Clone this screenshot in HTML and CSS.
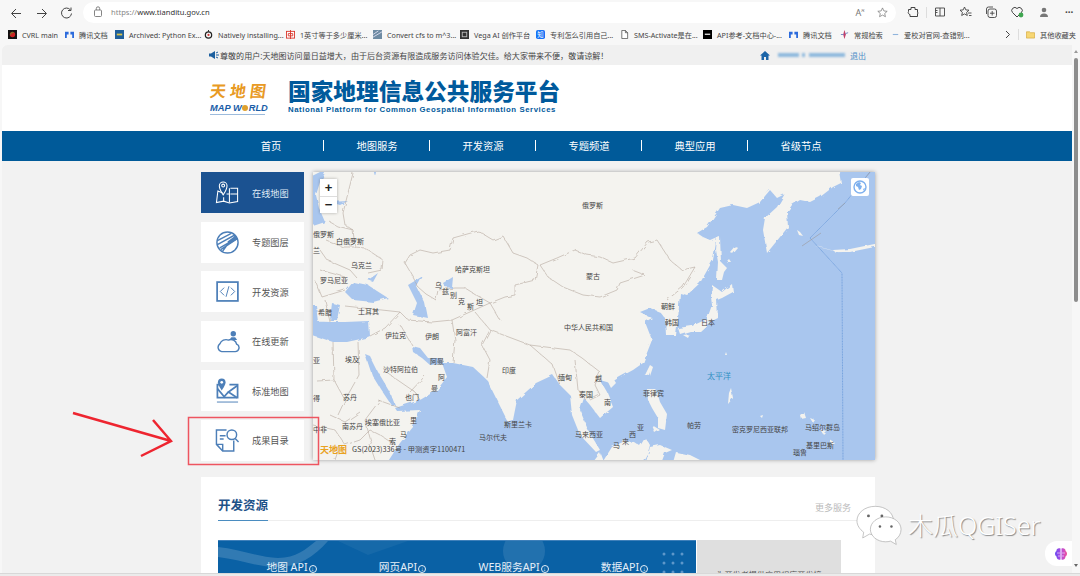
FILE: index.html
```html
<!DOCTYPE html>
<html lang="zh-CN">
<head>
<meta charset="utf-8">
<title>国家地理信息公共服务平台</title>
<link rel="stylesheet" href="styles.css">
</head>
<body>
<div class="app">
  <div class="toolbar">
    <svg class="tb-nav" width="76" height="24" viewBox="0 0 76 24"><g fill="none" stroke="#444" stroke-width="1"><path d="M20 12.500H11M15 8l-4.500 4.500L15 17"/><path d="M36 12.500H45M41 8l4.500 4.500L41 17"/><path d="M69.500 9a5 5 0 1 0 1 3.500M70 6.500V9.500H67"/></g></svg>
    <div class="address">
      <svg width="10" height="12" viewBox="0 0 10 12"><g fill="none" stroke="#777" stroke-width=".9"><rect x="1.500" y="4" width="7" height="6.500" rx="1"/><path d="M3.300 4V2.500a1.700 1.700 0 0 1 3.400 0V4"/></g></svg>
      <span class="url"><span class="url-dim">https://</span>www.tianditu.gov.cn</span>
      <span class="addr-right">
        <span class="read">A<sup>א</sup></span>
        <svg width="11" height="11" viewBox="0 0 12 12"><path d="M6 1l1.500 3.300 3.600.4-2.700 2.400.8 3.500L6 8.800l-3.200 1.800.8-3.500L.9 4.700l3.600-.4z" fill="none" stroke="#777" stroke-width=".8"/></svg>
      </span>
    </div>
    <div class="tb-icons">
      <svg width="12" height="12" viewBox="0 0 12 12"><path d="M4 1.500h4v2h2.500v2.500a1.500 1.500 0 0 1 0 2V10.500H3V8.500a2 2 0 0 1-1.500-3V3.500H4z" fill="none" stroke="#444"/></svg>
      <i class="tb-sep tb-sep-main"></i>
      <svg width="12" height="12" viewBox="0 0 12 12"><path d="M1.500 2h9v8h-9zM6 2v8M1.500 4.500h2M1.500 6.500h2" fill="none" stroke="#444" stroke-width=".9"/></svg>
      <svg width="13" height="12" viewBox="0 0 13 12"><path d="M5.500 1l1.300 2.900 3.200.3-2.400 2.200.7 3.100-2.800-1.600-2.800 1.600.7-3.100L1 4.200l3.200-.3zM9 7h3.500M10 9.500h2.500" fill="none" stroke="#444" stroke-width=".9"/></svg>
      <svg width="13" height="12" viewBox="0 0 13 12"><g fill="none" stroke="#444" stroke-width=".9"><rect x="3" y="3" width="8.500" height="8.500" rx="2"/><path d="M1.500 8V3a2 2 0 0 1 2-2H8M7.200 5v4.500M5 7.200h4.500"/></g></svg>
      <svg width="13" height="12" viewBox="0 0 13 12"><path d="M6 11L1.500 6.500a3 3 0 0 1 4.500-4 3 3 0 0 1 4.500 4z" fill="none" stroke="#444"/><circle cx="10" cy="9" r="2.400" fill="#3fa650"/></svg>
      <span class="avatar"><svg width="10" height="10" viewBox="0 0 10 10"><circle cx="5" cy="3" r="2.300" fill="#777"/><path d="M1 10a4 3.500 0 0 1 8 0z" fill="#777"/></svg></span>
      <span class="dots">···</span>
    </div>
  </div>

  <div class="bookmarks">
    <div class="bm bm1"><svg class="bi" viewBox="0 0 10 10"><rect width="10" height="10" fill="#111"/><circle cx="5" cy="5" r="3" fill="#c22"/><path d="M3 5a2 2 0 0 1 3-2" stroke="#3b3" fill="none"/></svg><span>CVRL main</span></div>
    <div class="bm bm2"><svg class="bi" viewBox="0 0 10 10"><path d="M0 2h4v3H2v4H0zM6 2h4v7H8V5H6z" fill="#2c6bdc"/></svg><span>腾讯文档</span></div>
    <div class="bm bm3"><svg class="bi" viewBox="0 0 10 10"><rect width="10" height="10" fill="#1f5f9b"/><rect x="2" y="4" width="6" height="2" fill="#d8c24a"/></svg><span>Archived: Python Ex...</span></div>
    <div class="bm bm4"><svg class="bi" viewBox="0 0 10 10"><circle cx="5" cy="5.500" r="3.500" fill="none" stroke="#222" stroke-width="1.400"/><circle cx="5" cy="5.500" r="1.200" fill="#c33"/><path d="M5 0v2" stroke="#222"/></svg><span>Natively installing...</span></div>
    <div class="bm bm5"><svg class="bi" viewBox="0 0 10 10"><rect x=".5" y="1.500" width="9" height="7.500" fill="#fff" stroke="#d9362b"/><path d="M5 0v10M2.500 4h5v2.500h-5z" stroke="#d9362b" fill="none"/></svg><span>1英寸等于多少厘米...</span></div>
    <div class="bm bm6"><svg class="bi" viewBox="0 0 10 10"><rect width="10" height="10" fill="#6e8ba3"/><path d="M0 8L10 2M0 5l6-4" stroke="#dde" /></svg><span>Convert cfs to m^3...</span></div>
    <div class="bm bm7"><svg class="bi" viewBox="0 0 10 10"><rect width="10" height="10" fill="#333"/><rect x="2.500" y="2.500" width="5" height="5" fill="none" stroke="#bbb"/></svg><span>Vega AI 创作平台</span></div>
    <div class="bm bm8"><svg class="bi" viewBox="0 0 10 10"><rect width="10" height="10" rx="2" fill="#1772f6"/><text x="1.500" y="8" class="bi-text">知</text></svg><span>专利怎么引用自己...</span></div>
    <div class="bm bm9"><svg class="bi" viewBox="0 0 10 10"><path d="M2 .5h4l2.500 2.500v6.500H2zM6 .5V3h2.500" fill="#fff" stroke="#444" stroke-width=".8"/></svg><span>SMS-Activate是在...</span></div>
    <div class="bm bm10"><svg class="bi" viewBox="0 0 10 10"><rect width="10" height="10" fill="#000"/><rect x="2" y="4" width="6" height="1.500" fill="#ddd"/></svg><span>API参考-文档中心-...</span></div>
    <div class="bm bm11"><svg class="bi" viewBox="0 0 10 10"><path d="M0 2h4v3H2v4H0zM6 2h4v7H8V5H6z" fill="#2c6bdc"/></svg><span>腾讯文档</span></div>
    <div class="bm bm12"><svg class="bi" viewBox="0 0 10 10"><path d="M5 0l1.500 5L5 10 3.500 5z" fill="#c2406a"/><path d="M1 5h3M6 4l3-1" stroke="#6b7fc0"/></svg><span>常规检索</span></div>
    <div class="bm bm13"><svg class="bi" viewBox="0 0 10 10"><path d="M2 5h6" stroke="#8fb4dc" stroke-width="1.200"/></svg><span>爱校对官网-查错别...</span></div>
    <div class="bm-end">
      <svg width="6" height="9" viewBox="0 0 6 9"><path d="M1 1l3.500 3.500L1 8" fill="none" stroke="#444"/></svg>
      <i class="tb-sep"></i>
      <div class="bm"><svg class="bi" viewBox="0 0 10 10"><path d="M.5 2h3.500l1 1h4.500v6h-9z" fill="#f7d774" stroke="#d3a431" stroke-width=".7"/></svg><span>其他收藏夹</span></div>
    </div>
  </div>

  <div class="viewport">
    <div class="page">
      <div class="notice">
        <div class="notice-msg">
          <svg width="10" height="8" viewBox="0 0 10 8"><path d="M0 2.500h2L6 0v8L2 5.500H0z" fill="#1c5f9f"/><path d="M7 2l2-1M7 4h3M7 6l2 1" stroke="#1c5f9f"/></svg>
          <span>尊敬的用户:天地图访问量日益增大，由于后台资源有限造成服务访问体验欠佳。给大家带来不便，敬请谅解！</span>
        </div>
        <div class="notice-user">
          <svg width="10" height="9" viewBox="0 0 10 9"><path d="M5 0L0 4.500h1.500V9h2.500V6h2v3h2.500V4.500H10z" fill="#1c65a8"/></svg>
          <span class="blur b1"></span><span class="blur b2"></span><span class="blur b3"></span>
          <a class="logout">退出</a>
        </div>
      </div>

      <header class="masthead">
        <div class="logo">
          <span class="logo-cn">天地图</span>
          <span class="logo-en">MAP W<b class="logo-o"></b>RLD</span>
          <i class="logo-swoosh"></i>
        </div>
        <div class="brand">
          <h1>国家地理信息公共服务平台</h1>
          <p>National Platform for Common Geospatial Information Services</p>
        </div>
      </header>

      <nav class="nav">
        <a>首页</a><a>地图服务</a><a>开发资源</a><a>专题频道</a><a>典型应用</a><a class="last">省级节点</a>
      </nav>

      <main class="main">
        <div class="hero">
          <ul class="side">
            <li class="side-item active">
              <svg viewBox="0 0 26 26" class="side-ico"><g fill="none" stroke="#fff" stroke-width="1.100"><path d="M8 13.500L3 11.500 1.500 23.500 9 22l6 2 8.500-1.500V8.500L16 8.500"/><path d="M16 14.500h7.500M15 8.500v15M9 22v-4M15 14.500h-3"/><path d="M8.500 15.500S4.500 9.500 4.500 6a4 4 0 0 1 8 0c0 3.500-4 9.500-4 9.500z"/><circle cx="8.500" cy="5.800" r="1.500"/></g></svg>
              <span>在线地图</span>
            </li>
            <li class="side-item">
              <svg viewBox="0 0 26 26" class="side-ico"><g fill="none" stroke="#4d7fb8" stroke-width="1.500"><circle cx="13" cy="13" r="11"/><path d="M2.500 11L17 3.500M3 15L20 5.500l2.500 4L6 20.500M5 18.500l9-5M8 22l6-8.500"/></g><path d="M13 12L21 6l2 4-9 5z" fill="#4d7fb8"/></svg>
              <span>专题图层</span>
            </li>
            <li class="side-item">
              <svg viewBox="0 0 26 26" class="side-ico"><g fill="none" stroke="#4d7fb8"><rect x="2.200" y="3.200" width="21.600" height="19.600" stroke-width="1.800"/><path d="M9.500 9l-4 4 4 4M16.500 9l4 4-4 4M14.500 7.500l-3 11" stroke-width="1"/></g></svg>
              <span>开发资源</span>
            </li>
            <li class="side-item">
              <svg viewBox="0 0 26 26" class="side-ico"><g fill="none" stroke="#4d7fb8" stroke-width="1.500"><path d="M7 23.500h14a4 4 0 0 0 1.500-7.700A6 6 0 0 0 14 11.500a7 7 0 0 0-9 4 4.500 4.500 0 0 0 2 8z"/></g><circle cx="19" cy="5" r="2.800" fill="#4d7fb8"/><path d="M15 11.500h8l-2-3h-4z" fill="#4d7fb8"/></svg>
              <span>在线更新</span>
            </li>
            <li class="side-item">
              <svg viewBox="0 0 26 26" class="side-ico"><g fill="none" stroke="#4d7fb8" stroke-width="1.800"><path d="M9 7H2.500v13.500h21V7H15"/><path d="M2.500 11l8 9.500M23 8l-9 6.500 9 6M14 14.500l-5 5.500"/><path d="M2 25h22" stroke-width="1"/></g><path d="M7 13S3 7.500 3 4.500a4 4 0 0 1 8 0C11 7.500 7 13 7 13z" fill="#4d7fb8"/><circle cx="7" cy="4.500" r="1.400" fill="#fff"/></svg>
              <span>标准地图</span>
            </li>
            <li class="side-item">
              <svg viewBox="0 0 26 26" class="side-ico"><g fill="none" stroke="#4d7fb8" stroke-width="1.500"><path d="M12 2H1.500v15L8 24h11.500V13"/><path d="M1.500 17H8v7M5 8h6M5 11.500h4" /><circle cx="17.500" cy="7" r="5"/><path d="M21 11l3.500 3.500"/></g></svg>
              <span>成果目录</span>
            </li>
          </ul>

          <div class="map">
            <svg class="map-svg" viewBox="313 172 562 288" width="562" height="288">
              <defs>
                <filter id="wiggle" x="-5%" y="-5%" width="110%" height="110%">
                  <feTurbulence type="fractalNoise" baseFrequency="0.14" numOctaves="2" seed="4"/>
                  <feDisplacementMap in="SourceGraphic" scale="3.500"/>
                </filter>
              </defs>
              <rect x="313" y="172" width="562" height="288" class="sea"/>
              <g filter="url(#wiggle)">
              <g class="land">
                <path d="M306,165L838,165 841,183 833,187 820,197 810,202 800,200 792,205 787,212 788,227 780,237 767,253 763,230 765,218 777,207 790,185 787,193 777,198 770,190 760,202 747,208 733,205 720,208 707,227 697,233 703,237 710,240 717,237 713,260 700,283 687,295 680,293 678,320 676,335 666,335 665,318 660,312 650,308 640,312 652,318 645,322 652,340 643,363 633,370 620,377 610,383 600,380 607,392 613,407 600,418 590,405 584,398 580,410 588,430 600,450 596,452 580,435 572,415 570,395 560,385 553,375 536,383 517,400 513,420 507,420 497,400 487,380 473,367 453,363 442,363 447,377 437,390 420,400 395,408 397,411 420,410 413,427 400,443 385,466 306,466Z"/>
                <path d="M645,375L650,365 653,367 650,376Z M608,382L613,378 616,383 611,388Z"/>
                <path d="M647,389L656,389 660,402 667,414 665,430 658,428 658,418 652,408 648,400Z M652,425L660,430 655,433Z"/>
                <path d="M712,285L722,292 732,284 733,292 722,298 717,300 718,318 710,322 700,331 690,331 680,334 678,328 692,326 707,319 712,305 711,297Z M683,335L690,334 688,338Z"/>
                <path d="M717,238L720,237 721,262 727,268 724,272 722,280 717,280 718,262 716,250Z"/>
                <path d="M600,466L612,447 625,441 634,442 640,446 645,438 650,445 648,452 640,466Z"/>
                <path d="M645,466L650,447 660,445 672,450 665,453 660,466Z M672,466L676,452 690,455 712,466Z M590,466L600,453 605,466Z"/>
                <path d="M797,230L800,232 803,236 799,235Z M833,250L850,249 880,243 880,246 850,252 835,252Z M815,246L820,247 842,253 830,250Z M505,417L510,415 512,420 508,422Z"/>
                <path d="M730,252L735,246 738,248 733,254Z M726,262L729,259 731,262Z M725,355L726,352 727,355Z M729,393L731,388 733,398 728,404Z M760,416L763,415 762,418Z M800,415L804,412 806,418 801,419Z M810,418L815,420 813,423Z M821,430L827,432 824,435Z M830,440L835,443 832,446Z"/>
              </g>
              <g class="sea">
                <path d="M306,179L328,168 320,182 316,195 319,208 325,222 316,225 306,228Z M330,202L348,201 340,205Z M372,168L376,168 374,175Z"/>
                <path d="M345,292L353,282 368,285 377,291 388,298 373,302 353,300Z M368,280L378,273 373,282Z"/>
                <path d="M408,285L423,276 417,287 425,303 428,318 413,315 417,303Z"/>
                <path d="M443,283L453,277 452,288 445,287Z"/>
                <path d="M306,321L330,322 345,322 369,321 370,336 365,338 347,342 333,342 306,333Z M306,305L316,305 318,322 306,322Z M332,303L340,305 337,320 330,320Z"/>
                <path d="M365,354L370,356 378,372 390,392 395,405 392,406 380,388 372,375Z"/>
                <path d="M412,346L420,348 428,358 441,358 443,364 430,365 422,358 413,352Z"/>
              </g>
              <g class="border">
                <path d="M405,263L410,255 420,250 433,253 450,250 453,238 478,231 493,240 503,236 513,253 527,258 538,265 535,280 515,285 515,295 505,297 490,303 478,296 465,288 455,288 438,290 436,300 426,294 418,287 412,275Z"/>
                <path d="M540,265L557,258 575,250 587,255 600,257 613,263 635,258 648,242 657,240 670,260 682,270 695,267 683,287 667,300 M632,270L645,275 620,283 617,290 600,297 583,295 563,287 548,277 540,265"/>
                <path d="M353,173L343,213 345,225 353,230 355,247 365,248 383,260 382,270 368,273 M330,222L337,226 353,230 M326,240L343,247 355,247 M320,250L327,260 350,270 357,278 M320,270L345,277 M315,280L322,297 345,290 M325,300L330,322 M345,306L400,312 408,320 432,322 M400,312L385,328 370,336 M400,325L412,345 M432,322L452,320 455,340 453,363 M452,320L490,303 500,320 M475,312L490,330 482,345 490,360 487,378 M490,330L530,345 553,365 560,385 M530,345L570,350 582,358 600,372 M575,360L578,390 586,400 M600,372L595,385 600,395 590,400"/>
                <path d="M333,342L334,380 317,381 M358,342L359,375 345,400 338,415 M334,380L345,400 M360,412L345,422 330,415 M313,425L335,430 345,445 360,440 370,430 380,435 395,445 M380,400L365,420 372,445 M400,408L378,400 M383,370L415,392 420,400 M410,392L425,376 M340,445L335,460 M370,445L375,460"/>
              </g>
              </g>
              <path d="M870,172L845,203 810,238 842,273 843,460" class="ocean-line"/>
              <path d="M845,203L838,209M870,172L866,177" class="ocean-grey"/>
              <path d="M802,246L821,233" class="ocean-grey"/>
              <g class="lbl">
                <text x="582" y="208">俄罗斯</text><text x="313" y="237">俄罗斯</text><text x="336" y="244">白俄罗斯</text><text x="306" y="253">波兰</text>
                <text x="351" y="268">乌克兰</text><text x="320" y="283">罗马尼亚</text><text x="455" y="272">哈萨克斯坦</text><text x="586" y="279">蒙古</text>
                <text x="435" y="288">乌</text><text x="442" y="294">兹</text><text x="450" y="298">别</text><text x="458" y="304">克</text><text x="467" y="309">斯</text><text x="476" y="305">坦</text>
                <text x="318" y="315">希腊</text><text x="358" y="314">土耳其</text><text x="385" y="338">伊拉克</text><text x="425" y="339">伊朗</text><text x="456" y="335">阿富汗</text>
                <text x="564" y="330">中华人民共和国</text><text x="345" y="362">埃及</text><text x="383" y="372">沙特阿拉伯</text><text x="430" y="364">阿曼</text><text x="438" y="380">阿</text><text x="431" y="391">曼</text>
                <text x="502" y="373">印度</text><text x="558" y="380">缅甸</text><text x="343" y="400">苏丹</text><text x="405" y="400">也门</text><text x="579" y="397">泰国</text><text x="595" y="381">越</text><text x="604" y="405">南</text>
                <text x="504" y="427">斯里兰卡</text><text x="342" y="429">南苏丹</text><text x="365" y="425">埃塞俄比亚</text><text x="313" y="432">中非</text><text x="479" y="440">马尔代夫</text>
                <text x="410" y="423">里</text><text x="400" y="437">马</text><text x="389" y="444">索</text><text x="575" y="437">马来西亚</text>
                <text x="637" y="430">亚</text><text x="629" y="437">西</text><text x="622" y="444">来</text><text x="613" y="448">马</text>
                <text x="643" y="396">菲律宾</text><text x="687" y="428">帕劳</text><text x="732" y="432">密克罗尼西亚联邦</text><text x="805" y="430">马绍尔群岛</text><text x="806" y="448">基里巴斯</text><text x="793" y="455">瑙鲁</text>
                <text x="661" y="309">朝鲜</text><text x="665" y="325">韩国</text><text x="701" y="325">日本</text><text x="313" y="363">亚</text><text x="313" y="401">得</text>
                <text x="707" y="379" class="lbl-sea">太平洋</text>
                <text x="320" y="453" class="lbl-logo">天地图</text>
                <text x="352" y="452" class="lbl-gs">GS(2023)336号 - 甲测资字1100471</text>
              </g>
            </svg>
            <div class="zoom">
              <span class="zoom-btn">+</span>
              <span class="zoom-btn">−</span>
            </div>
            <div class="layer-btn">
              <svg width="14" height="14" viewBox="0 0 14 14"><circle cx="7" cy="7" r="6" fill="none" stroke="#7eb0ee" stroke-width="1.400"/><path d="M3 4l3-2 2 1-1 2 2 1-1 3-2 1-1-3-2-1zM10 9l2-1-1 3z" fill="#7eb0ee"/></svg>
            </div>
          </div>
        </div>

        <section class="resources">
          <div class="res-head">
            <h2>开发资源</h2>
            <a class="more">更多服务</a>
          </div>
          <div class="res-body">
            <div class="banner">
              <svg class="banner-bg" viewBox="0 0 478 33" width="478" height="33">
                <path d="M0 6C20 8 40 16 60 17 78 17 88 8 98 0L110 0C96 16 80 26 60 26 38 26 20 18 0 16Z" class="wave"/>
                <path d="M120 0H190L150 14Z" class="wave2"/>
                <circle cx="306" cy="10" r="21" class="disc"/>
                <g class="dots-g"><circle cx="446" cy="13" r="1.500"/><circle cx="455" cy="13" r="1.500"/><circle cx="464" cy="13" r="1.500"/><circle cx="446" cy="22" r="1.500"/><circle cx="455" cy="22" r="1.500"/><circle cx="464" cy="22" r="1.500"/><circle cx="446" cy="31" r="1.500"/><circle cx="455" cy="31" r="1.500"/><circle cx="464" cy="31" r="1.500"/></g>
              </svg>
              <a>地图 API<i class="dl">↓</i></a><a>网页API<i class="dl">↓</i></a><a>WEB服务API<i class="dl">↓</i></a><a>数据API<i class="dl">↓</i></a>
            </div>
            <div class="res-side">为开发者提供应用程序开发接</div>
          </div>
        </section>
      </main>

      <div class="watermark">
        <svg width="46" height="41" viewBox="0 0 48 42"><g fill="#fff" stroke="#aaa" stroke-width=".7"><path d="M20 1C9 1 1 8 1 16c0 5 3 9 7 12l-1 6 7-4c2 .5 4 .7 6 .7 11 0 19-7 19-15S31 1 20 1z"/><path d="M31 12c-9 0-16 6-16 13s7 13 16 13c2 0 3-.2 5-.7l6 3.500-1-5c4-2.500 6-6.500 6-10.800 0-7-7-13-16-13z"/></g><g fill="#666"><circle cx="13" cy="11" r="1.500"/><circle cx="27" cy="11" r="1.500"/><circle cx="25" cy="22" r="1.300"/><circle cx="37" cy="22" r="1.300"/></g></svg>
        <span>木瓜QGISer</span>
      </div>
      <div class="brain">
        <svg width="14" height="14" viewBox="0 0 14 14"><defs><linearGradient id="bg" x1="0" x2="1"><stop offset="0" stop-color="#6a4bf0"/><stop offset=".5" stop-color="#b14be0"/><stop offset="1" stop-color="#f0509a"/></linearGradient></defs><path d="M6.500 1.500C4 .5 2 2.500 2.500 4 .5 5 .5 8.500 2.500 9.500 2.500 12 5 13.500 6.500 12.500ZM7.500 1.500C10 .5 12 2.500 11.500 4 13.500 5 13.500 8.500 11.500 9.500 11.500 12 9 13.500 7.500 12.500Z" fill="url(#bg)"/><path d="M3 6h3M8 6h3M4 9h2M8 9h2" stroke="#e9d8ff" stroke-width=".7"/></svg>
      </div>

      <svg class="annot" width="330" height="60" viewBox="0 0 330 60">
        <rect x="188.500" y="11.500" width="130" height="47" class="annot-box"/>
        <path d="M73 7L171 35M153 14L171 35 141 50" class="annot-arrow"/>
      </svg>
    </div>
    <div class="scrollbar">
      <i class="arrow-up"></i>
      <i class="thumb"></i>
      <i class="arrow-down"></i>
    </div>
  </div>
  <div class="window-edge"></div>
</div>
</body>
</html>
```
FILE: styles.css
```css
* { box-sizing: border-box; }
html, body { margin: 0; padding: 0; }
body {
  width: 1080px;
  height: 576px;
  overflow: hidden;
  font-family: "Noto Sans", "Noto Sans CJK SC", sans-serif;
  background: #f7f7f7;
  color: #444;
}
a { text-decoration: none; }
i { font-style: normal; }
ul { list-style: none; margin: 0; padding: 0; }
.app { display: flex; flex-direction: column; height: 576px; }

/* browser chrome */
.toolbar { height: 24px; flex: none; display: flex; align-items: center; padding-left: 1px; }
.tb-nav { flex: none; margin-top: 1px; }
.address {
  margin-left: 6px; width: 813px; flex: none; height: 21px; background: #fff; border-radius: 11px;
  display: flex; align-items: center; padding: 0 8.500px 0 10px;
}
.url { margin-left: 8px; font-size: 7.600px; color: #333; }
.url-dim { color: #888; }
.addr-right { margin-left: auto; display: flex; align-items: center; gap: 12px; }
.read { font-size: 9px; color: #777; line-height: 1; }
.read sup { font-size: 5px; }
.tb-icons { display: flex; align-items: center; margin-left: 11px; gap: 13px; }
.tb-sep { width: 1px; height: 11px; background: #ddd; display: block; flex: none; }
.tb-sep-main { margin: 0 -5.500px 0 -6.500px; }
.avatar { width: 12px; height: 12px; display: flex; align-items: center; justify-content: center; margin: 0 0 0 1px; }
.dots { font-size: 10px; font-weight: 700; color: #444; margin-left: 2px; }
.bookmarks { height: 21px; flex: none; display: flex; align-items: center; padding-left: 8px; font-size: 7.200px; color: #444; white-space: nowrap; }
.bm { display: flex; align-items: center; gap: 5px; flex: none; }
.bi { width: 9px; height: 9px; flex: none; }
.bi-text { font-size: 7px; fill: #fff; }
.bm1 { width: 57px; } .bm2 { width: 50px; } .bm3 { width: 89px; } .bm4 { width: 82px; }
.bm5 { width: 87px; } .bm6 { width: 87px; } .bm7 { width: 76px; } .bm8 { width: 84px; }
.bm9 { width: 83px; } .bm10 { width: 86px; } .bm11 { width: 51px; } .bm12 { width: 51px; }
.bm13 { width: 114px; gap: 4px; }
.bm-end { display: flex; align-items: center; gap: 7px; }

/* page */
.viewport { flex: 1; min-height: 0; display: flex; }
.page { position: relative; flex: 1; min-width: 0; margin-left: 2px; background: #f2f2f2; border-top-left-radius: 6px; overflow: hidden; }
.notice { height: 20px; background: #f0f0f0; display: flex; align-items: center; padding-left: 207px; font-size: 8.050px; color: #444; }
.notice-msg { display: flex; align-items: center; gap: 1px; width: 551px; white-space: nowrap; }
.notice-user { display: flex; align-items: center; gap: 3px; }
.blur { display: block; height: 4px; filter: blur(1.200px); background: #8fb9dd; }
.b1 { width: 21px; margin-left: 5px; }
.b2 { width: 3px; }
.b3 { width: 36px; margin-left: 1px; }
.logout { color: #4c8cc6; font-size: 8px; margin-left: 2px; }
.masthead { height: 66px; background: #fff; display: flex; padding-left: 208px; align-items: flex-start; }
.logo { position: relative; width: 57px; margin-top: 16px; display: flex; flex-direction: column; flex: none; }
.logo-cn { font-size: 16px; line-height: 20px; font-weight: 700; color: #e89a24; letter-spacing: 4px; transform: skewX(-8deg); white-space: nowrap; }
.logo-en { font-family: "Liberation Sans", sans-serif; font-size: 9.300px; font-weight: 700; font-style: italic; color: #1a5ea8; line-height: 9px; margin-top: 3px; white-space: nowrap; }
.logo-o { display: inline-block; width: 6px; height: 6px; border-radius: 50%; background: #e0a02c; margin: 0 .5px; }
.logo-swoosh { display: block; height: 1px; width: 55px; background: #9dbbdc; margin-top: 1px; }
.brand { margin-left: 21px; margin-top: 13px; }
.brand h1 { margin: 0; font-size: 22.700px; line-height: 27px; font-weight: 900; color: #005a9c; white-space: nowrap; }
.brand p { margin: 0; font-family: "Liberation Sans", sans-serif; font-size: 7.800px; line-height: 9px; font-weight: 700; letter-spacing: .56px; color: #005a9c; white-space: nowrap; }
.nav { height: 30px; background: #005a99; display: flex; padding-left: 216px; align-items: center; }
.nav a { position: relative; width: 106px; text-align: center; font-size: 10.300px; line-height: 30px; color: #fff; }
.nav a::after { content: ""; position: absolute; right: 0; top: 9px; width: 1px; height: 11px; background: #fff; }
.nav a.last::after { display: none; }
.main { padding: 11px 0 0 199px; }
.hero { display: flex; gap: 9px; height: 289px; align-items: flex-start; }
.side { width: 103px; height: 289px; display: flex; flex-direction: column; justify-content: space-between; }
.side-item { height: 41px; background: #fff; display: flex; align-items: center; padding-left: 14px; font-size: 9.200px; color: #555; }
.side-item span { margin-left: 12px; white-space: nowrap; }
.side-item.active { background: #1b5291; color: #dfe9f5; }
.side-ico { width: 25px; height: 25px; flex: none; }
.map { position: relative; width: 562px; height: 288px; box-shadow: 0 0 4px rgba(0,0,0,.35); overflow: hidden; }
.map-svg { display: block; }
.sea, .sea path { fill: #a9c6ee; }
.land path { fill: #f4f3ef; }
.border path { fill: none; stroke: #b5a89e; stroke-width: .6; }
.ocean-line { fill: none; stroke: #5d90d6; stroke-width: .7; stroke-dasharray: 1 .6; }
.ocean-grey { fill: none; stroke: #9d9fa6; stroke-width: .7; }
.lbl text { font-size: 7px; fill: #444; font-family: "Noto Sans CJK SC", sans-serif; }
.lbl .lbl-sea { font-size: 8px; fill: #2f8fc2; }
.lbl .lbl-logo { font-size: 9px; font-weight: 700; fill: #e9a21f; }
.lbl .lbl-gs { font-size: 7.300px; fill: #444; }
.zoom { position: absolute; left: 7px; top: 7px; width: 17px; height: 34px; background: #fff; box-shadow: 0 0 3px rgba(0,0,0,.3); display: flex; flex-direction: column; }
.zoom-btn { flex: 1; display: flex; align-items: center; justify-content: center; font: 700 13px/1 "Liberation Sans", sans-serif; color: #222; }
.zoom-btn + .zoom-btn { border-top: 1px solid #ddd; }
.layer-btn { position: absolute; left: 538px; top: 6px; width: 18px; height: 18px; background: #fff; border-radius: 2px; display: flex; align-items: center; justify-content: center; }
.resources { margin-top: 16px; width: 674px; height: 96px; background: #fff; padding: 21px 17px 0; overflow: hidden; }
.res-head { height: 23px; display: flex; justify-content: space-between; border-bottom: 1px solid #eee; }
.res-head h2 { margin: 0; height: 23px; font-size: 12.500px; line-height: 15px; font-weight: 700; color: #1d5288; border-bottom: 1px solid #4a8cc0; white-space: nowrap; }
.more { font-size: 9px; color: #bbb; margin: 3px 7px 0 0; line-height: 14px; }
.res-body { margin-top: 19px; display: flex; gap: 1px; }
.banner { position: relative; width: 478px; height: 40px; background: #0a61a5; padding: 20px 0 0 18px; display: flex; border-top: 1px solid #3f80ba; }
.banner a { position: relative; width: 111px; text-align: center; font-size: 10.700px; line-height: 13px; color: #e6eff8; white-space: nowrap; }
.banner-bg { position: absolute; left: 0; top: 0; }
.wave { fill: rgba(255,255,255,.16); }
.wave2 { fill: rgba(255,255,255,.05); }
.disc { fill: rgba(255,255,255,.1); }
.dots-g circle { fill: #5d97ca; }
.dl { display: inline-block; width: 8px; height: 8px; border: 1px solid #e6eff8; border-radius: 50%; font: 700 6px/6px "Liberation Sans", sans-serif; margin-left: 1px; text-align: center; }
.res-side { width: 144px; height: 40px; background: #dfdfdf; font-size: 8.100px; color: #555; text-align: center; padding-top: 29px; line-height: 11px; white-space: nowrap; }

/* overlays */
.watermark { position: absolute; left: 854px; top: 460px; display: flex; align-items: center; gap: 6px; }
.watermark span { font-size: 25px; line-height: 1; color: #fff; text-shadow: 1px 1px 1px #888; white-space: nowrap; font-weight: 300; }
.brain { position: absolute; right: 0; top: 496px; width: 27px; height: 25px; background: #fff; border-radius: 12px 0 0 12px; display: flex; align-items: center; justify-content: center; padding-left: 4px; }
.annot { position: absolute; left: -2px; top: 361px; overflow: visible; }
.annot-box { fill: none; stroke: #ee5560; stroke-width: 1.500; }
.annot-arrow { fill: none; stroke: #ee2530; stroke-width: 2.500; }
.scrollbar { width: 8px; flex: none; background: #f7f7f7; display: flex; flex-direction: column; align-items: center; position: relative; }
.arrow-up { width: 0; height: 0; border: 2.500px solid transparent; border-bottom: 3px solid #999; border-top: 0; margin-top: 5px; }
.thumb { width: 4px; height: 244px; background: #8d8d8d; border-radius: 2px; margin-top: 5px; }
.arrow-down { position: absolute; top: 519px; width: 0; height: 0; border: 2.500px solid transparent; border-top: 3px solid #666; border-bottom: 0; }
.window-edge { height: 3px; flex: none; background: #ebebeb; border-top: 1px solid #d8d8d8; }
```
